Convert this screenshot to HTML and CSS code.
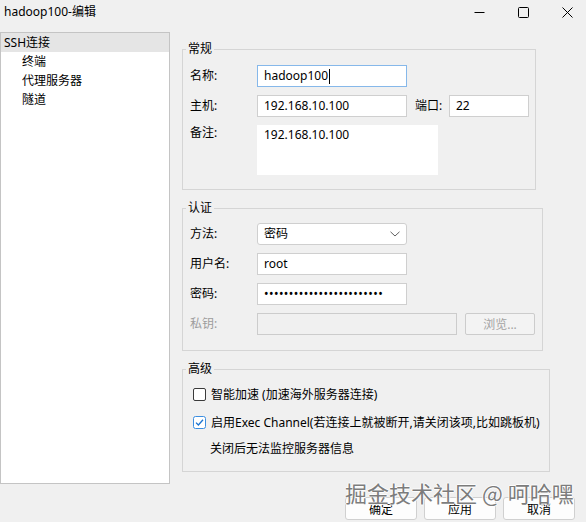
FILE: index.html
```html
<!DOCTYPE html>
<html lang="zh-CN">
<head>
<meta charset="utf-8">
<title>hadoop100-编辑</title>
<link rel="stylesheet" href="styles.css">
</head>
<body>
<div class="window">
  <header class="titlebar">
    <span class="title">hadoop100-编辑</span>
    <div class="controls">
      <svg class="ctl" width="11" height="11" viewBox="0 0 11 11"><line x1="0.5" y1="5.5" x2="10.5" y2="5.5" stroke="#000" stroke-width="1"/></svg>
      <svg class="ctl" width="11" height="11" viewBox="0 0 11 11"><rect x="0.5" y="0.5" width="10" height="10" rx="1" fill="none" stroke="#000" stroke-width="1"/></svg>
      <svg class="ctl" width="11" height="11" viewBox="0 0 11 11"><path d="M0.5 0.5 L10.5 10.5 M10.5 0.5 L0.5 10.5" stroke="#000" stroke-width="1"/></svg>
    </div>
  </header>

  <div class="content">
    <ul class="tree">
      <li class="node selected">SSH连接</li>
      <li class="node child">终端</li>
      <li class="node child">代理服务器</li>
      <li class="node child">隧道</li>
    </ul>

    <div class="panels">
      <fieldset class="group general">
        <legend>常规</legend>
        <div class="row">
          <span class="label">名称:</span>
          <div class="field w150 focused">hadoop100<span class="caret"></span></div>
        </div>
        <div class="row">
          <span class="label">主机:</span>
          <div class="field w150">192.168.10.100</div>
          <span class="label port-label">端口:</span>
          <div class="field w80">22</div>
        </div>
        <div class="row top">
          <span class="label">备注:</span>
          <div class="memo">192.168.10.100</div>
        </div>
      </fieldset>

      <fieldset class="group auth">
        <legend>认证</legend>
        <div class="row">
          <span class="label">方法:</span>
          <div class="field w150 combo">
            <span>密码</span>
            <svg class="chevron" width="10" height="6" viewBox="0 0 10 6"><polyline points="0.5,0.8 5,5 9.5,0.8" fill="none" stroke="#606060" stroke-width="1"/></svg>
          </div>
        </div>
        <div class="row">
          <span class="label">用户名:</span>
          <div class="field w150">root</div>
        </div>
        <div class="row">
          <span class="label">密码:</span>
          <div class="field w150 secret">••••••••••••••••••••••••</div>
        </div>
        <div class="row">
          <span class="label disabled">私钥:</span>
          <div class="field w200 off"></div>
          <div class="browse">浏览...</div>
        </div>
      </fieldset>

      <fieldset class="group advanced">
        <legend>高级</legend>
        <div class="check-row">
          <span class="box"></span>
          <span>智能加速 (加速海外服务器连接)</span>
        </div>
        <div class="check-row second">
          <svg class="box-svg" width="13" height="13" viewBox="0 0 13 13">
            <rect x="0.5" y="0.5" width="12" height="12" rx="2" fill="#fff" stroke="#3c8ee0" stroke-width="1"/>
            <polyline points="3,6.6 5.4,9 10,3.8" fill="none" stroke="#1a73d0" stroke-width="1.3"/>
          </svg>
          <span>启用Exec Channel(若连接上就被断开,请关闭该项,比如跳板机)</span>
        </div>
        <div class="note">关闭后无法监控服务器信息</div>
      </fieldset>
    </div>
  </div>

  <div class="footer">
    <div class="btn">确定</div>
    <div class="btn">应用</div>
    <div class="btn">取消</div>
  </div>

  <div class="watermark">掘金技术社区 @ 呵哈嘿</div>
</div>
</body>
</html>
```

FILE: styles.css
```css
html, body {
  margin: 0;
  padding: 0;
  background: #f0f0f0;
}

.window {
  position: relative;
  width: 586px;
  height: 522px;
  overflow: hidden;
  font-family: "Noto Sans", "Noto Sans CJK SC", sans-serif;
  font-size: 12px;
  color: #000;
  background: #f0f0f0;
}

/* title bar */
.titlebar {
  height: 24px;
  display: flex;
  align-items: center;
  padding-left: 4px;
}

.title {
  font-size: 12px;
  line-height: 16px;
}

.controls {
  margin-left: auto;
  display: flex;
  align-items: center;
  gap: 33px;
  padding-right: 13px;
}

.ctl {
  display: block;
}

/* main area */
.content {
  margin-top: 8px;
  display: flex;
  gap: 12px;
}

.tree {
  list-style: none;
  margin: 0;
  padding: 0;
  width: 170px;
  height: 452px;
  box-sizing: border-box;
  background: #fff;
  border: 1px solid #c4c4c4;
  flex: none;
}

.node {
  height: 19px;
  line-height: 19px;
  padding-left: 3px;
  white-space: nowrap;
}

.node.selected {
  background: #e5e5e5;
}

.node.child {
  padding-left: 21px;
}

.panels {
  padding-top: 9px;
  display: flex;
  flex-direction: column;
  align-items: flex-start;
}

/* group boxes */
.group {
  margin: 0 0 10px 0;
  border: 1px solid #d5d5d5;
  box-sizing: border-box;
  min-width: 0;
  display: flex;
  flex-direction: column;
  gap: 8px;
}

.group legend {
  line-height: 16px;
  padding: 0 2px;
  margin-left: -4px;
}

.general {
  width: 354px;
  padding: 8px 7px 14px 7px;
}

.auth {
  width: 361px;
  padding: 7px 7px 15px 7px;
}

.advanced {
  width: 368px;
  padding: 7px 10px 12px 10px;
  gap: 0;
}

.advanced legend {
  margin-left: -7px;
}

.row {
  display: flex;
  align-items: center;
  height: 22px;
}

.row.top {
  align-items: flex-start;
  height: 50px;
}

.label {
  width: 67px;
  flex: none;
  line-height: 16px;
  white-space: nowrap;
}

.row.top .label {
  margin-top: 0;
}

.label.disabled {
  color: #9d9d9d;
}

.port-label {
  width: 34px;
  margin-left: 8px;
}

.field {
  height: 22px;
  box-sizing: border-box;
  border: 1px solid #cfcfcf;
  background: #fff;
  padding: 0 6px;
  line-height: 20px;
  display: flex;
  align-items: center;
  white-space: nowrap;
  flex: none;
}

.w150 { width: 150px; }
.w80 { width: 80px; }
.w200 { width: 200px; }

.field.focused {
  border-color: #86b8ea;
}

.caret {
  display: inline-block;
  width: 1px;
  height: 15px;
  background: #000;
  margin-left: 1px;
}

.field.combo {
  border-radius: 3px;
  justify-content: space-between;
  padding-right: 6px;
}

.chevron {
  display: block;
}

.field.secret {
  font-size: 12px;
  letter-spacing: 0.45px;
}

.field.off {
  background: #f0f0f0;
  border-color: #cccccc;
}

.browse {
  margin-left: 8px;
  width: 72px;
  height: 22px;
  box-sizing: border-box;
  border: 1px solid #cccccc;
  border-radius: 2px;
  background: #f3f3f3;
  color: #a3a3a3;
  display: flex;
  align-items: center;
  justify-content: center;
}

.memo {
  width: 181px;
  height: 50px;
  box-sizing: border-box;
  background: #fff;
  padding: 2px 7px;
  line-height: 16px;
  flex: none;
}

/* check boxes */
.check-row {
  height: 20px;
  display: flex;
  align-items: center;
  gap: 5px;
  white-space: nowrap;
}

.check-row.second {
  margin-top: 8px;
}

.box {
  width: 13px;
  height: 13px;
  box-sizing: border-box;
  border: 1px solid #3a3a3a;
  border-radius: 2px;
  background: #fff;
  flex: none;
}

.box-svg {
  display: block;
  flex: none;
}

.note {
  margin-top: 7px;
  margin-left: 17px;
  line-height: 20px;
  white-space: nowrap;
}

/* dialog buttons */
.footer {
  margin-top: 13px;
  display: flex;
  justify-content: flex-end;
  gap: 7px;
  padding-right: 11px;
}

.btn {
  width: 72px;
  height: 23px;
  box-sizing: border-box;
  border: 1px solid #d0d0d0;
  border-radius: 3px;
  background: #fdfdfd;
  display: flex;
  align-items: center;
  justify-content: center;
}

/* signature stamped across the corner */
.watermark {
  position: absolute;
  left: 345px;
  top: 479px;
  font-family: "Noto Sans CJK SC", sans-serif;
  font-size: 22px;
  line-height: 26px;
  color: #737373;
  white-space: nowrap;
  text-shadow: 1px 0 0 #fff, -1px 0 0 #fff, 0 1px 0 #fff, 0 -1px 0 #fff;
  opacity: 0.92;
}
```
